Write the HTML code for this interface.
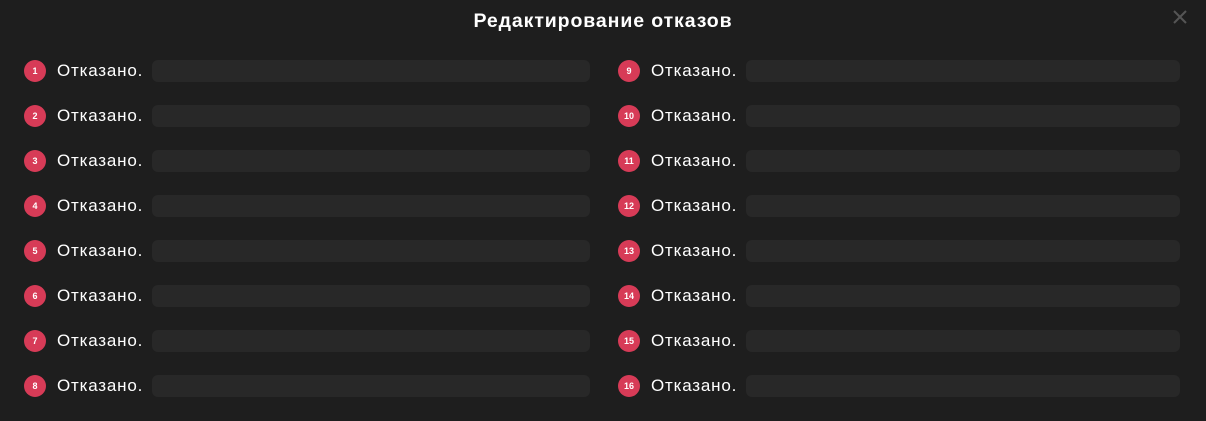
<!DOCTYPE html><html><head><meta charset="utf-8"><style>
body{margin:0;width:1206px;height:421px;background:#1e1e1e;font-family:"Liberation Sans",sans-serif;color:#fff;overflow:hidden;position:relative}
h1{position:absolute;top:9px;left:0;width:1206px;text-align:center;margin:0;font-size:19.5px;font-weight:bold;line-height:24px;letter-spacing:0.9px}
.x{position:absolute;left:1173px;top:10px}
.col{position:absolute;top:60px}
.row{display:flex;align-items:center;height:22px;margin-bottom:23px}
.n{width:22px;height:22px;border-radius:50%;background:#d73b57;font-size:9px;font-weight:bold;display:flex;align-items:center;justify-content:center;margin-right:11px;flex:none}
.t{font-size:17px;letter-spacing:0.8px;margin-right:9px;white-space:nowrap}
.i{flex:1;height:22px;background:#282828;border-radius:6px}
</style></head><body>
<h1>Редактирование отказов</h1>
<svg class="x" width="14" height="14" viewBox="0 0 14 14"><path d="M1 1L13 13M13 1L1 13" stroke="#555" stroke-width="2"/></svg>
<div class="col" style="left:24px;width:566px">
<div class="row"><div class="n">1</div><div class="t">Отказано.</div><div class="i"></div></div>
<div class="row"><div class="n">2</div><div class="t">Отказано.</div><div class="i"></div></div>
<div class="row"><div class="n">3</div><div class="t">Отказано.</div><div class="i"></div></div>
<div class="row"><div class="n">4</div><div class="t">Отказано.</div><div class="i"></div></div>
<div class="row"><div class="n">5</div><div class="t">Отказано.</div><div class="i"></div></div>
<div class="row"><div class="n">6</div><div class="t">Отказано.</div><div class="i"></div></div>
<div class="row"><div class="n">7</div><div class="t">Отказано.</div><div class="i"></div></div>
<div class="row"><div class="n">8</div><div class="t">Отказано.</div><div class="i"></div></div>
</div>
<div class="col" style="left:618px;width:562px">
<div class="row"><div class="n">9</div><div class="t">Отказано.</div><div class="i"></div></div>
<div class="row"><div class="n">10</div><div class="t">Отказано.</div><div class="i"></div></div>
<div class="row"><div class="n">11</div><div class="t">Отказано.</div><div class="i"></div></div>
<div class="row"><div class="n">12</div><div class="t">Отказано.</div><div class="i"></div></div>
<div class="row"><div class="n">13</div><div class="t">Отказано.</div><div class="i"></div></div>
<div class="row"><div class="n">14</div><div class="t">Отказано.</div><div class="i"></div></div>
<div class="row"><div class="n">15</div><div class="t">Отказано.</div><div class="i"></div></div>
<div class="row"><div class="n">16</div><div class="t">Отказано.</div><div class="i"></div></div>
</div>
</body></html>
